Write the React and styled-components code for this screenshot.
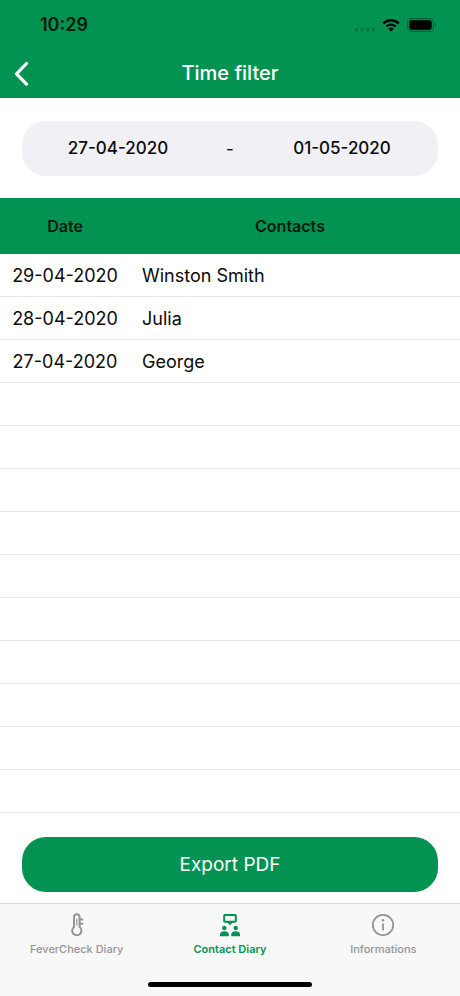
import React from 'react';
import styled, { createGlobalStyle } from 'styled-components';

const GREEN = '#029251';

const contacts = [
  { date: '29-04-2020', name: 'Winston Smith' },
  { date: '28-04-2020', name: 'Julia' },
  { date: '27-04-2020', name: 'George' },
];

const VISIBLE_ROWS = 13;

const WifiIcon = () => (
  <svg width='18' height='14' viewBox='0 0 18 14' fill='none' stroke='#000'>
    <path d='M1.2 5.3a11.2 11.2 0 0 1 15.6 0' strokeWidth='2.5' />
    <path d='M4.3 8.5a6.8 6.8 0 0 1 9.4 0' strokeWidth='2.3' />
    <path d='M9 13.6 6.3 10.9a3.9 3.9 0 0 1 5.4 0z' fill='#000' stroke='none' />
  </svg>
);

const SignalIcon = () => (
  <svg width='20' height='14' viewBox='0 0 20 14' fill='#01743f'>
    <rect x='0' y='10' width='3' height='3.6' rx='0.8' />
    <rect x='5.6' y='10' width='3' height='3.6' rx='0.8' />
    <rect x='11.2' y='10' width='3' height='3.6' rx='0.8' />
    <rect x='16.8' y='10' width='3' height='3.6' rx='0.8' />
  </svg>
);

const BatteryIcon = () => (
  <svg width='30' height='14' viewBox='0 0 30 14'>
    <rect
      x='0.6'
      y='0.6'
      width='25.8'
      height='12.8'
      rx='3.8'
      fill='none'
      stroke='#01613a'
      strokeWidth='1.1'
    />
    <rect x='2.3' y='2.3' width='22.4' height='9.4' rx='2.2' fill='#000' />
    <path d='M27.8 4.8c2 .8 2 3.6 0 4.4z' fill='#01542e' />
  </svg>
);

const BackIcon = () => (
  <svg
    width='16'
    height='26'
    viewBox='0 0 16 26'
    fill='none'
    stroke='#fff'
    strokeWidth='3.2'
    strokeLinecap='round'
    strokeLinejoin='round'
  >
    <path d='M12.5 3.5 2.5 13.8l10 10.3' />
  </svg>
);

const ThermometerIcon = () => (
  <svg
    width='24'
    height='24'
    viewBox='0 0 24 24'
    fill='none'
    stroke='currentColor'
    strokeWidth='2'
    strokeLinejoin='round'
  >
    <path d='M9 14V4a2.8 2.8 0 0 1 5.6 0v10a4.6 4.6 0 1 1-5.6 0z' />
    <path d='M11.8 5.5v7' strokeWidth='1.2' />
    <path d='M14.6 6.4h3.6M14.6 10.8h3.6' />
  </svg>
);

const MeetingIcon = () => (
  <svg width='24' height='24' viewBox='0 0 24 24' fill='currentColor'>
    <rect
      x='6.2'
      y='1.9'
      width='11.6'
      height='6.8'
      rx='0.6'
      fill='none'
      stroke='currentColor'
      strokeWidth='2'
    />
    <path d='M9.2 9h5.6L12 12.6z' />
    <circle cx='6.3' cy='15' r='2.2' />
    <circle cx='17.7' cy='15' r='2.2' />
    <path d='M2 23.3v-1.7c0-2.2 1.9-3.4 4.4-3.4s4.4 1.2 4.4 3.4v1.7z' />
    <path d='M13.2 23.3v-1.7c0-2.2 1.9-3.4 4.4-3.4s4.4 1.2 4.4 3.4v1.7z' />
  </svg>
);

const InfoIcon = () => (
  <svg
    width='24'
    height='24'
    viewBox='0 0 24 24'
    fill='none'
    stroke='currentColor'
    strokeWidth='1.8'
  >
    <circle cx='12' cy='12' r='10.2' />
    <path d='M12 10.5v7' />
    <circle cx='12' cy='7.3' r='1.3' fill='currentColor' stroke='none' />
  </svg>
);

const App = () => {
  const rows = Array.from({ length: VISIBLE_ROWS }, (_, i) => contacts[i]);

  return (
    <>
      <GlobalStyle />
      <Screen>
        <StatusBar>
          <Clock>10:29</Clock>
          <StatusIcons>
            <SignalIcon />
            <WifiIcon />
            <BatteryIcon />
          </StatusIcons>
        </StatusBar>
        <NavBar>
          <BackButton aria-label='Back'>
            <BackIcon />
          </BackButton>
          <Title>Time filter</Title>
        </NavBar>

        <Main>
          <Filter>
            <DateButton aria-label='From 27-04-2020'>27-04-2020</DateButton>
            <span>-</span>
            <DateButton aria-label='To 01-05-2020'>01-05-2020</DateButton>
          </Filter>

          <Table>
            <thead>
              <tr>
                <DateHead scope='col'>Date</DateHead>
                <ContactsHead scope='col'>Contacts</ContactsHead>
              </tr>
            </thead>
            <tbody>
              {rows.map((row, i) => (
                <tr key={i}>
                  <DateCell>{row?.date}</DateCell>
                  <ContactCell>{row?.name}</ContactCell>
                </tr>
              ))}
            </tbody>
          </Table>

          <ExportButton>Export PDF</ExportButton>
        </Main>

        <Footer>
          <Tabs>
            <Tab href='#fever'>
              <ThermometerIcon />
              FeverCheck Diary
            </Tab>
            <Tab href='#contacts' $active aria-current='page'>
              <MeetingIcon />
              Contact Diary
            </Tab>
            <Tab href='#informations'>
              <InfoIcon />
              Informations
            </Tab>
          </Tabs>
          <HomeIndicator />
        </Footer>
      </Screen>
    </>
  );
};

export default App;

const GlobalStyle = createGlobalStyle`
  * {
    box-sizing: border-box;
  }
  body {
    margin: 0;
    background: #fff;
    color: #0a0a0a;
    font-family: Inter, 'Liberation Sans', sans-serif;
  }
  button {
    border: 0;
    padding: 0;
    font-family: inherit;
    cursor: pointer;
  }
  svg {
    display: block;
    flex: none;
  }
`;

const Screen = styled.div`
  min-height: 100vh;
  display: flex;
  flex-direction: column;
`;

const StatusBar = styled.div`
  height: 48px;
  padding: 2px 23px 0 40px;
  display: flex;
  align-items: center;
  justify-content: space-between;
  background: ${GREEN};
`;

const Clock = styled.span`
  font-size: 18px;
  line-height: 20px;
  font-weight: 600;
  color: #001b0c;
`;

const StatusIcons = styled.div`
  display: flex;
  align-items: center;
  gap: 7px;
`;

const NavBar = styled.header`
  height: 50px;
  padding: 0 14px;
  display: grid;
  grid-template-columns: 32px 1fr 32px;
  align-items: center;
  background: ${GREEN};
`;

const BackButton = styled.button`
  height: 44px;
  display: flex;
  align-items: center;
  background: transparent;
`;

const Title = styled.h1`
  margin: 0;
  text-align: center;
  font-size: 20px;
  line-height: 24px;
  font-weight: 500;
  color: #fff;
`;

const Main = styled.main`
  flex: 1;
  display: flex;
  flex-direction: column;
`;

const Filter = styled.div`
  height: 55px;
  margin: 23px 22px 22px;
  border-radius: 24px;
  display: grid;
  grid-template-columns: 1fr 32px 1fr;
  align-items: center;
  text-align: center;
  font-size: 17px;
  background: #f1f0f5;
`;

const DateButton = styled.button`
  height: 100%;
  padding-bottom: 2px;
  background: transparent;
  color: inherit;
  font-size: 17px;
  font-weight: 500;
`;

const Table = styled.table`
  width: 100%;
  table-layout: fixed;
  border-collapse: separate;
  border-spacing: 0;
`;

const HeadCell = styled.th`
  height: 56px;
  padding: 0;
  font-size: 16px;
  font-weight: 600;
  color: #001b0c;
  background: ${GREEN};
`;

const DateHead = styled(HeadCell)`
  width: 130px;
`;

const ContactsHead = styled(HeadCell)`
  padding-right: 10px;
`;

const Cell = styled.td`
  height: 43px;
  padding: 2px 0 0;
  font-size: 18px;
  line-height: 24px;
  border-bottom: 1px solid #e6e6e6;
`;

const DateCell = styled(Cell)`
  text-align: center;
`;

const ContactCell = styled(Cell)`
  padding-left: 12px;
`;

const ExportButton = styled.button`
  height: 55px;
  margin: 24px 22px 11px;
  border-radius: 24px;
  font-size: 19px;
  color: #fff;
  background: ${GREEN};
`;

const Footer = styled.footer`
  padding-bottom: 9px;
  border-top: 1px solid #d8d8d8;
  background: #f8f8f8;
`;

const Tabs = styled.nav`
  display: grid;
  grid-template-columns: repeat(3, 1fr);
`;

const Tab = styled.a`
  padding-top: 9px;
  display: flex;
  flex-direction: column;
  align-items: center;
  gap: 4px;
  font-size: 11px;
  line-height: 16px;
  font-weight: ${({ $active }) => ($active ? 600 : 500)};
  text-decoration: none;
  color: ${({ $active }) => ($active ? GREEN : '#949494')};
`;

const HomeIndicator = styled.div`
  width: 164px;
  height: 5px;
  margin: 25px auto 0;
  border-radius: 3px;
  background: #000;
`;
